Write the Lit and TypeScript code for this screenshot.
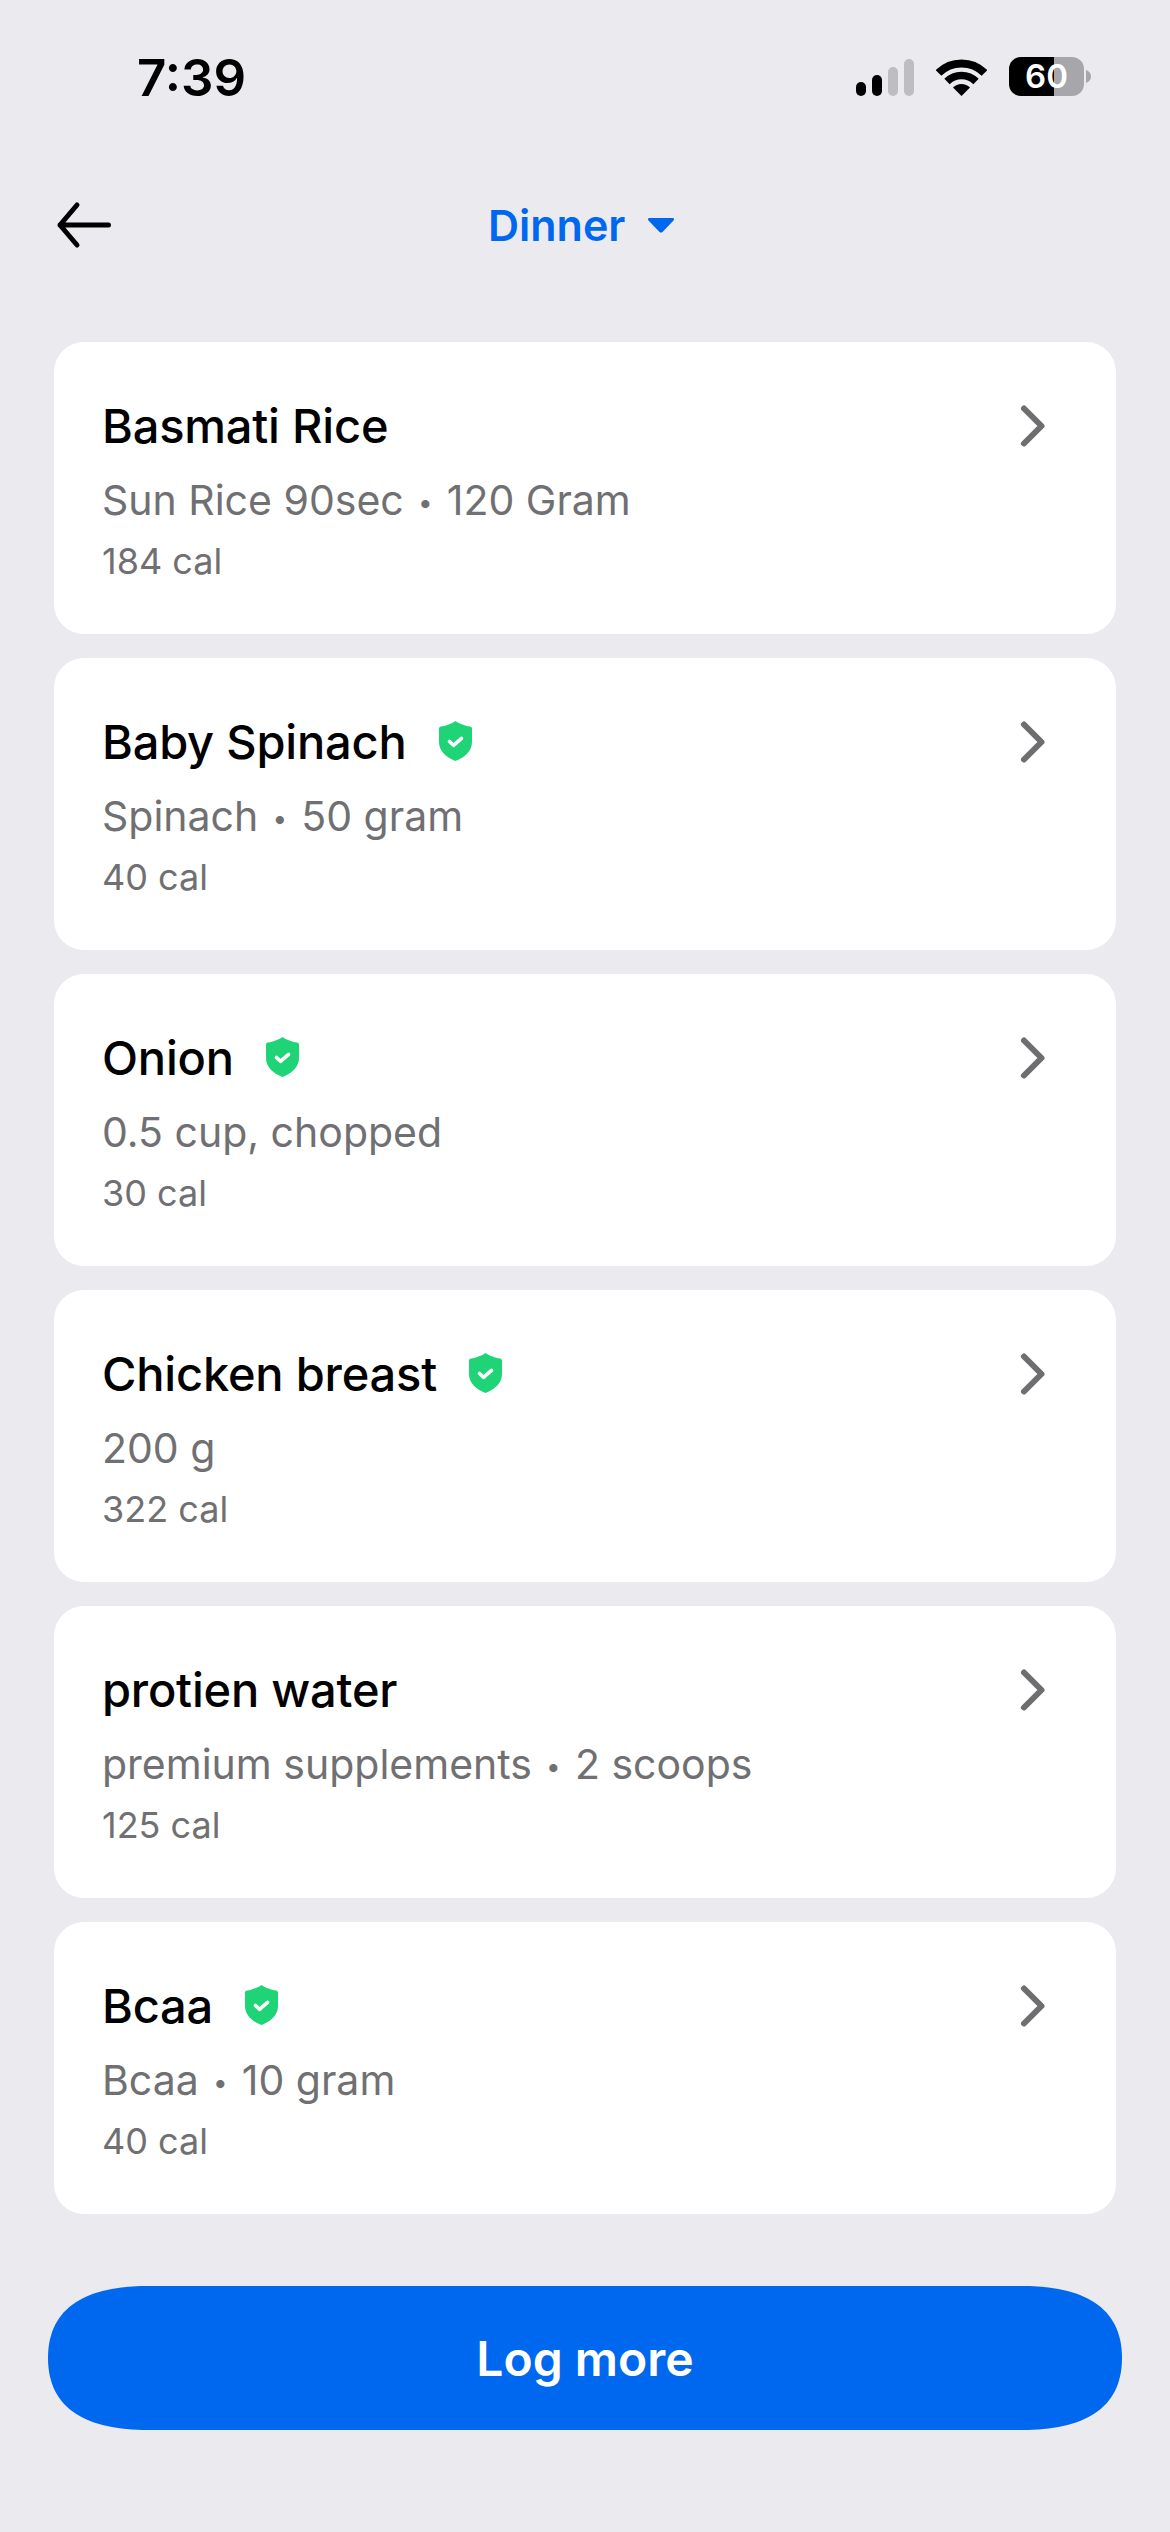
import { LitElement, html, css, svg } from "lit";
import { customElement } from "lit/decorators.js";

type Food = { name: string; sub: string[]; cal: string; verified: boolean };

const foods: Food[] = [
  { name: "Basmati Rice", sub: ["Sun Rice 90sec", "120 Gram"], cal: "184 cal", verified: false },
  { name: "Baby Spinach", sub: ["Spinach", "50 gram"], cal: "40 cal", verified: true },
  { name: "Onion", sub: ["0.5 cup, chopped"], cal: "30 cal", verified: true },
  { name: "Chicken breast", sub: ["200 g"], cal: "322 cal", verified: true },
  { name: "protien water", sub: ["premium supplements", "2 scoops"], cal: "125 cal", verified: false },
  { name: "Bcaa", sub: ["Bcaa", "10 gram"], cal: "40 cal", verified: true },
];

const shield = svg`<svg class="shield" width="33" height="40" viewBox="0 0 33 40">
  <path fill="#1fd477" d="M16.5 0C19 2 26 5 31 5.5c1.2.1 2 1 2 2.200V21c0 9-7 15.500-16.500 19C7 36.500 0 30 0 21V7.700C0 6.500.8 5.600 2 5.500 7 5 14 2 16.500 0Z"/>
  <path fill="none" stroke="#fff" stroke-width="3.600" stroke-linecap="round" stroke-linejoin="round" d="M10.500 20.500l4 3.800 8-7"/>
</svg>`;

@customElement("app-root")
export class AppRoot extends LitElement {
  static styles = css`
    :host {
      display: block;
      width: 1170px;
      height: 2532px;
      background: #ebebef;
      font-family: Inter, "Liberation Sans", sans-serif;
      overflow: hidden;
    }
    .status {
      display: flex;
      justify-content: space-between;
      align-items: flex-start;
      padding: 53px 79px 0 137px;
      height: 50px;
    }
    .time {
      font-size: 51px;
      line-height: 50px;
      font-weight: 600;
      color: #000;
    }
    .indicators {
      display: flex;
      gap: 22px;
      margin-top: 4px;
      align-items: flex-start;
    }
    .signal {
      display: flex;
      align-items: flex-end;
      gap: 6px;
      height: 39px;
      box-sizing: border-box;
    }
    .bar {
      width: 10px;
      border-radius: 5px;
      background: #000;
    }
    .bar.off {
      background: #bdbdc2;
    }
    .b1 { height: 14px; }
    .b2 { height: 21px; }
    .b3 { height: 29px; }
    .b4 { height: 37px; }
    .wifi {
      margin-top: 2px;
      display: block;
    }
    .battery {
      display: flex;
      align-items: center;
      gap: 2px;
    }
    .cell {
      width: 75px;
      height: 39px;
      border-radius: 12px;
      background: linear-gradient(90deg, #000 60%, #a6a6ab 60%);
      color: #fff;
      font-size: 33px;
      font-weight: 600;
      line-height: 39px;
      text-align: center;
    }
    .nav {
      display: flex;
      align-items: center;
      height: 80px;
      margin-top: 82px;
      padding-left: 54px;
    }
    .back {
      display: block;
      width: 60px;
      height: 48px;
    }
    .meal {
      display: flex;
      align-items: center;
      gap: 23px;
      margin-left: 374px;
      color: #0068ee;
      font-size: 43px;
      line-height: 60px;
      font-weight: 600;
    }
    .list {
      display: flex;
      flex-direction: column;
      gap: 24px;
      margin-top: 77px;
      padding: 0 54px;
    }
    .card {
      display: flex;
      justify-content: space-between;
      box-sizing: border-box;
      height: 292px;
      padding: 43px 70px 0 48px;
      border-radius: 30px;
      background: #fff;
    }
    .title {
      display: flex;
      align-items: center;
      gap: 32px;
      height: 80px;
      font-size: 47px;
      font-weight: 500;
      letter-spacing: -0.2px;
      color: #000;
    }
    .sub {
      font-size: 41px;
      line-height: 70px;
      color: #707073;
    }
    .dot {
      display: inline-block;
      width: 43px;
      text-align: center;
      font-size: 26px;
      vertical-align: 3px;
      line-height: 1;
    }
    .cal {
      font-size: 36px;
      line-height: 52px;
      color: #707073;
    }
    .chev {
      display: block;
      margin-top: 18px;
    }
    .foot {
      padding: 72px 48px 0;
    }
    .log {
      display: flex;
      align-items: center;
      justify-content: center;
      height: 144px;
      color: #fff;
      background: #0068ee;
      font-size: 48px;
      font-weight: 600;
      clip-path: path("M100 0H974C1034 0 1074 20 1074 72C1074 124 1034 144 974 144H100C40 144 0 124 0 72C0 20 40 0 100 0Z");
    }
  `;

  render() {
    return html`
      <div class="status">
        <div class="time">7:39</div>
        <div class="indicators">
          <div class="signal">
            <div class="bar b1"></div>
            <div class="bar b2"></div>
            <div class="bar off b3"></div>
            <div class="bar off b4"></div>
          </div>
          <svg class="wifi" width="51" height="37" viewBox="0 0 51 37">
            <path fill="#000" d="M25.500 37L17 28.500A12 12 0 0 1 34 28.500Z" />
            <path fill="none" stroke="#000" stroke-width="7.500" d="M11 22.500A20.500 20.500 0 0 1 40 22.500" />
            <path fill="none" stroke="#000" stroke-width="8" d="M2.500 14A32.500 32.500 0 0 1 48.500 14" />
          </svg>
          <div class="battery">
            <div class="cell">60</div>
            <svg width="5" height="13" viewBox="0 0 5 13">
              <path fill="#a6a6ab" d="M0 0C3 1 5 3.500 5 6.500S3 12 0 13Z" />
            </svg>
          </div>
        </div>
      </div>
      <div class="nav">
        <svg class="back" viewBox="0 0 60 48">
          <path fill="none" stroke="#000" stroke-width="5" stroke-linecap="round" stroke-linejoin="round" d="M54.500 24H6M23 4L6 24 23 44" />
        </svg>
        <div class="meal">
          <span>Dinner</span>
          <svg width="26" height="15" viewBox="0 0 26 15">
            <path fill="#0068ee" d="M1.500 0H24.500C26 0 26.500 1.500 25.500 2.500L14.500 14C13.700 14.800 12.300 14.800 11.500 14L.5 2.500C-.5 1.500 0 0 1.500 0Z" />
          </svg>
        </div>
      </div>
      <div class="list">
        ${foods.map(
          (f) => html`
            <div class="card">
              <div>
                <div class="title"><span>${f.name}</span>${f.verified ? shield : ""}</div>
                <div class="sub">${f.sub.length > 1
                  ? html`${f.sub[0]}<span class="dot">•</span>${f.sub[1]}`
                  : f.sub[0]}</div>
                <div class="cal">${f.cal}</div>
              </div>
              <svg class="chev" width="28" height="46" viewBox="0 0 28 46">
                <path fill="none" stroke="#6e6e70" stroke-width="6" stroke-linecap="round" stroke-linejoin="round" d="M6 5.500L23.500 23 6 40.500" />
              </svg>
            </div>
          `
        )}
      </div>
      <div class="foot"><div class="log">Log more</div></div>
    `;
  }
}
